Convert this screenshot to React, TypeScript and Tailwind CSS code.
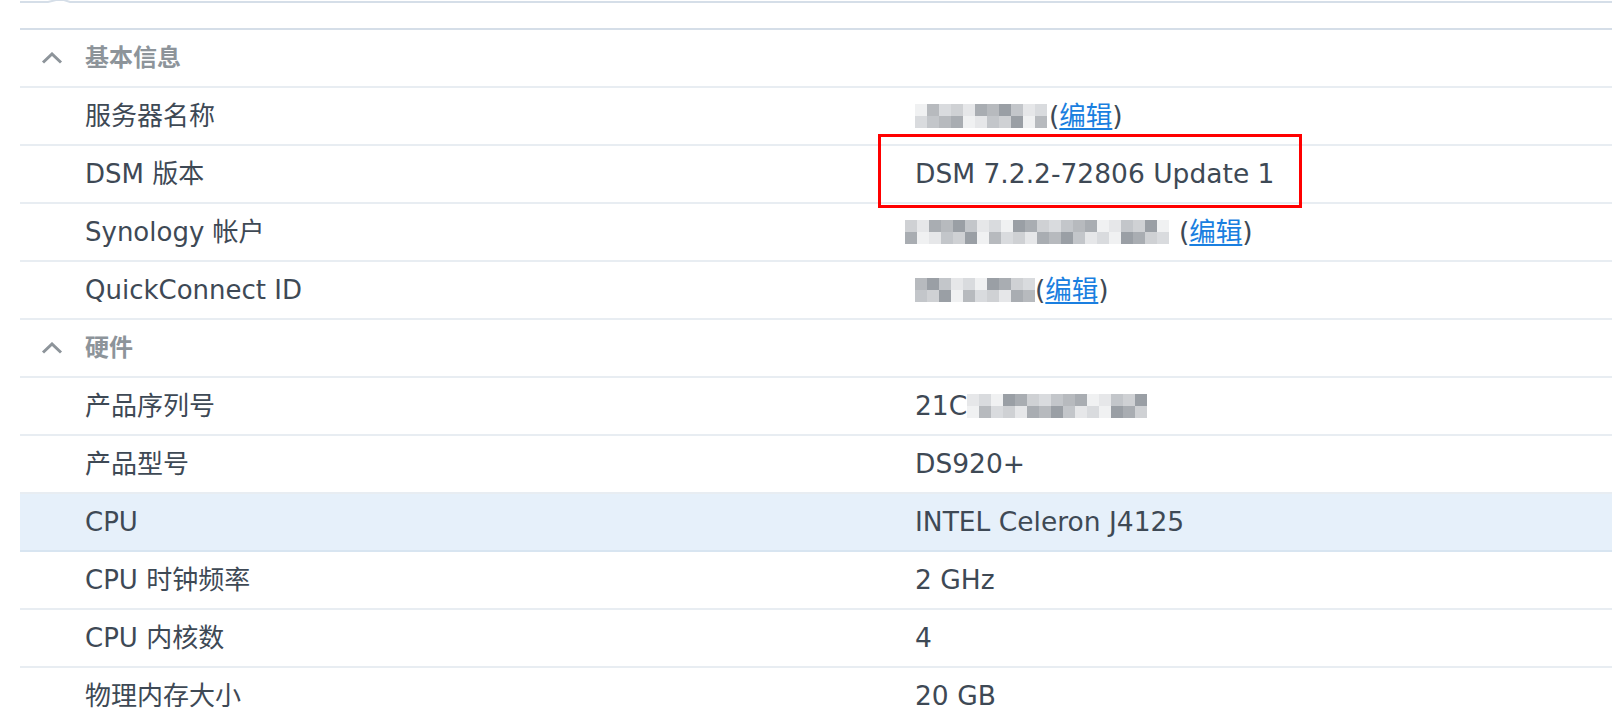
import React from "react";

const font = "font-['DejaVu_Sans','Noto_Sans_CJK_SC',sans-serif]";

// mosaic shades used for the pixelated (blurred) values
const shades = [
  "bg-[#c3c6ca]",
  "bg-[#a9adb2]",
  "bg-[#d9dbde]",
  "bg-[#9a9fa5]",
  "bg-[#e6e7e9]",
  "bg-[#b7babe]",
  "bg-[#cfd1d4]",
  "bg-[#f0f1f2]",
];

function Mosaic({ cols, seed }: { cols: number; seed: number }) {
  const rows = [0, 1];
  return (
    <div className="flex flex-col">
      {rows.map((r) => (
        <div key={r} className="flex">
          {Array.from({ length: cols }).map((_, i) => (
            <div
              key={i}
              className={`h-[12px] w-[12px] ${shades[(i * 5 + r * 3 + seed * 7 + ((i * i) % 3)) % shades.length]}`}
            />
          ))}
        </div>
      ))}
    </div>
  );
}

function Edit() {
  return (
    <span className="text-[#3e4955]">
      (<span className="text-[#1a7fe0] underline underline-offset-[3px]">编辑</span>)
    </span>
  );
}

function Header({ title }: { title: string }) {
  return (
    <div className="flex h-[58px] items-center border-b-2 border-[#e8edf2]">
      <svg width="22" height="12" viewBox="0 0 22 12" className="ml-[21px] mr-[22px]">
        <path d="M2 10.5 L11 2 L20 10.5" fill="none" stroke="#8d949a" strokeWidth="3" />
      </svg>
      <span className="text-[24px] font-semibold text-[#8d949a]">{title}</span>
    </div>
  );
}

function Row({
  label,
  children,
  active,
}: {
  label: string;
  children: React.ReactNode;
  active?: boolean;
}) {
  return (
    <div
      className={`flex h-[58px] items-center border-b-2 ${
        active ? "bg-[#e6f0fa] border-[#d8e5f1]" : "border-[#e8edf2]"
      }`}
    >
      <div className="w-[895px] shrink-0 pl-[65px] text-[26px] text-[#3e4955]">{label}</div>
      <div className="flex items-center text-[26.5px] text-[#3e4955]">{children}</div>
    </div>
  );
}

export default function App() {
  return (
    <div className={`relative h-[724px] w-[1612px] overflow-hidden bg-white ${font}`}>
      {/* top border of the search field */}
      <div className="h-[28px] pl-[20px]">
        <svg width="1592" height="4" viewBox="0 0 1592 4" className="block">
          <path d="M0 2 H28 L36 0 H44 L50 2 H1592" fill="none" stroke="#d5dee8" strokeWidth="2" />
        </svg>
      </div>

      <div className="ml-[20px] border-t-2 border-[#d5dee8]">
        <Header title="基本信息" />
        <Row label="服务器名称">
          <Mosaic cols={11} seed={1} />
          <span className="ml-[2px]">
            <Edit />
          </span>
        </Row>
        <Row label="DSM 版本">DSM 7.2.2-72806 Update 1</Row>
        <Row label="Synology 帐户">
          <div className="-ml-[10px]">
            <Mosaic cols={22} seed={2} />
          </div>
          <span className="ml-[10px]">
            <Edit />
          </span>
        </Row>
        <Row label="QuickConnect ID">
          <Mosaic cols={10} seed={3} />
          <Edit />
        </Row>
        <Header title="硬件" />
        <Row label="产品序列号">
          <span>21C</span>
          <Mosaic cols={15} seed={4} />
        </Row>
        <Row label="产品型号">DS920+</Row>
        <Row label="CPU" active>
          INTEL Celeron J4125
        </Row>
        <Row label="CPU 时钟频率">2 GHz</Row>
        <Row label="CPU 内核数">4</Row>
        <Row label="物理内存大小">20 GB</Row>
      </div>

      {/* red highlight box */}
      <div className="absolute left-[878px] top-[134px] h-[74px] w-[424px] border-[3px] border-[#ff0000]" />
    </div>
  );
}
